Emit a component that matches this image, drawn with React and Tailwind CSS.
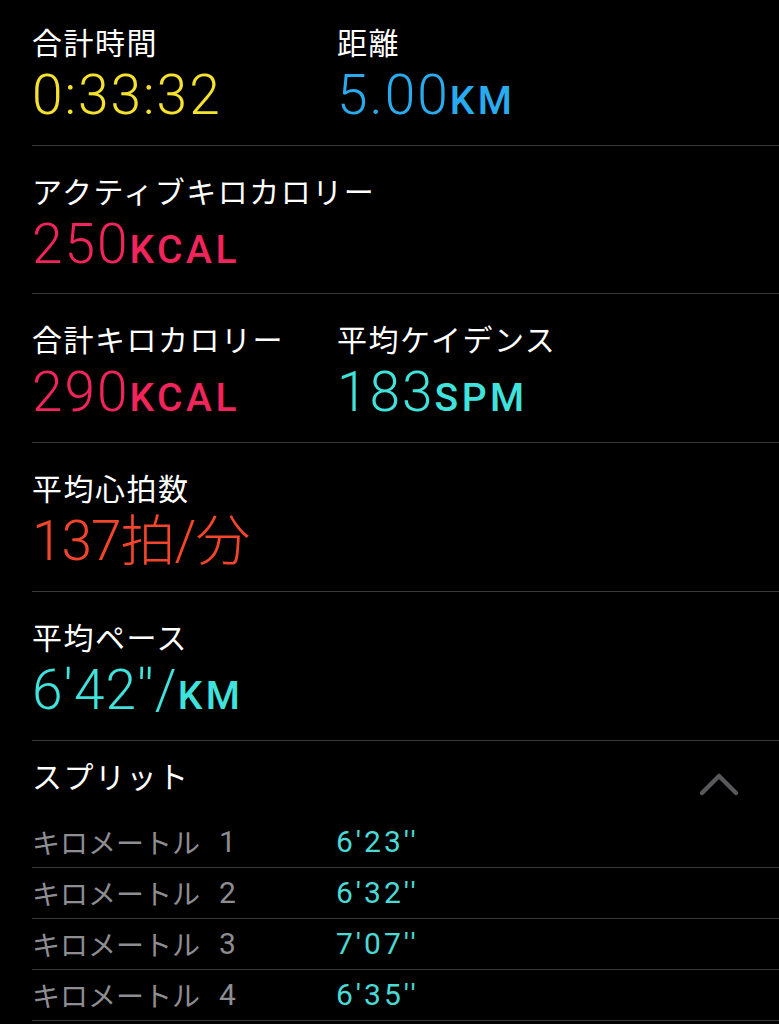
import React from "react";

const LABEL = "font-['Noto_Sans_CJK_JP','Noto_Sans',sans-serif] text-[30px] leading-[36px] tracking-[1.5px] text-white whitespace-nowrap";
const VALUE = "font-['Roboto','Noto_Sans_CJK_JP',sans-serif] font-light text-[55px] leading-[56px] h-[56px] mt-[8px] whitespace-nowrap";
const UNIT = "font-['Roboto',sans-serif] font-medium text-[39px] leading-none tracking-[0.09em]";

function Metric({ label, value, unit, color, track = "tracking-[2px]" }) {
  return (
    <div>
      <div className={LABEL}>{label}</div>
      <div className={`${VALUE} ${track} ${color}`}>
        {value}
        {unit && <span className={UNIT}>{unit}</span>}
      </div>
    </div>
  );
}

function Section({ pt, pb, children }) {
  return (
    <div className={`ml-[32px] border-b border-[#3a3a3c] ${pt} ${pb} grid grid-cols-[305px_1fr]`}>
      {children}
    </div>
  );
}

const splits = [
  ["1", "6'23''"],
  ["2", "6'32''"],
  ["3", "7'07''"],
  ["4", "6'35''"],
];

export default function App() {
  return (
    <div className="w-[779px] h-[1024px] bg-black overflow-hidden">
      <Section pt="pt-[23px]" pb="pb-[22px]">
        <Metric label="合計時間" value="0:33:32" color="text-[#f5e22e]" />
        <Metric label="距離" value="5.00" unit="KM" color="text-[#28acef]" />
      </Section>
      <Section pt="pt-[26px]" pb="pb-[21px]">
        <Metric label="アクティブキロカロリー" value="250" unit="KCAL" color="text-[#f1245b]" />
      </Section>
      <Section pt="pt-[26px]" pb="pb-[22px]">
        <Metric label="合計キロカロリー" value="290" unit="KCAL" color="text-[#f1245b]" />
        <Metric label="平均ケイデンス" value="183" unit="SPM" color="text-[#40e2dc]" />
      </Section>
      <Section pt="pt-[26px]" pb="pb-[22px]">
        <Metric label="平均心拍数" value="137拍/分" color="text-[#f2452b]" track="tracking-[-1px]" />
      </Section>
      <Section pt="pt-[26px]" pb="pb-[22px]">
        <div className="col-span-2">
          <div className={LABEL}>平均ペース</div>
          <div className={`${VALUE} tracking-[1px] text-[#40e2dc]`}>
            6'42''/<span className={UNIT}>KM</span>
          </div>
        </div>
      </Section>
      <div className="ml-[32px]">
        <div className="flex items-start justify-between pt-[16px] h-[76px]">
          <div className={LABEL}>スプリット</div>
          <svg className="mt-[14px] mr-[39px]" width="42" height="26" viewBox="0 0 42 26" fill="none">
            <path d="M4 22 L21 5 L38 22" stroke="#58585a" strokeWidth="4.5" strokeLinecap="round" strokeLinejoin="round" />
          </svg>
        </div>
        {splits.map(([n, v]) => (
          <div key={n} className="h-[51px] border-b border-[#3a3a3c] grid grid-cols-[304px_1fr] items-center">
            <div className="text-[#8d8d92] whitespace-nowrap flex items-center">
              <span className="font-['Noto_Sans_CJK_JP',sans-serif] text-[28px] leading-[32px]">キロメートル</span>
              <span className="font-['Roboto',sans-serif] text-[30px] leading-[32px] ml-[19px]">{n}</span>
            </div>
            <div className="font-['Roboto',sans-serif] text-[30px] leading-[32px] tracking-[3px] text-[#4ad9d4]">{v}</div>
          </div>
        ))}
      </div>
    </div>
  );
}
